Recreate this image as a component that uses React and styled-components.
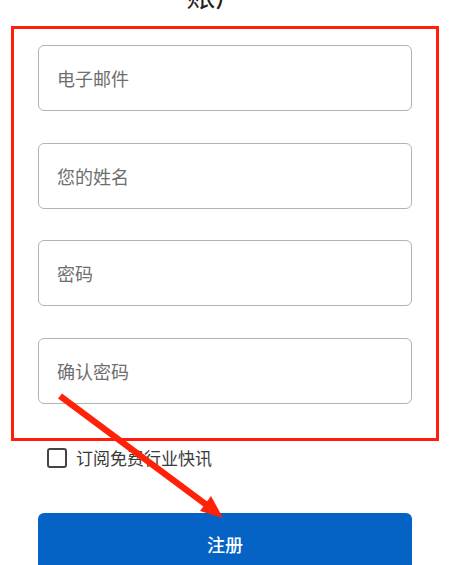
import React from "react";
import styled, { createGlobalStyle } from "styled-components";

const GlobalStyle = createGlobalStyle`
  html, body {
    margin: 0;
    padding: 0;
    background: #fff;
  }
  body {
    font-family: "Noto Sans CJK SC", "Noto Sans", sans-serif;
    overflow: hidden;
  }
`;

const Page = styled.div`
  position: relative;
  width: 471px;
  height: 565px;
  overflow: hidden;
  background: #fff;
`;

const Title = styled.h1`
  margin: -24px 0 0;
  padding-right: 40px;
  font-size: 29px;
  font-weight: 400;
  line-height: 36px;
  color: #222;
  text-align: center;
`;

const Highlight = styled.div`
  box-sizing: border-box;
  margin: 14px 0 0 11px;
  width: 428px;
  border: 3px solid #ff1e0a;
  padding: 16px 0 34px 24px;
  display: flex;
  flex-direction: column;
  gap: 31.5px;
`;

const Field = styled.input`
  box-sizing: border-box;
  width: 374px;
  height: 66px;
  border: 1.5px solid #b3b3b3;
  border-radius: 6px;
  padding: 0 18px;
  font-family: inherit;
  font-size: 18px;
  color: #333;
  outline: none;
  &::placeholder {
    color: #6e6e6e;
  }
`;

const CheckRow = styled.label`
  display: flex;
  align-items: center;
  gap: 9px;
  margin: 7px 0 0 47px;
  height: 20px;
  font-size: 17px;
  color: #3a3a3a;
`;

const Box = styled.span`
  box-sizing: border-box;
  width: 20px;
  height: 20px;
  border: 2px solid #444;
  border-radius: 3px;
`;

const Submit = styled.button`
  display: block;
  margin: 45px 0 0 38px;
  padding: 0 0 4px;
  width: 374px;
  height: 66px;
  border: none;
  border-radius: 6px;
  background: #0563c6;
  color: #fff;
  font-family: inherit;
  font-size: 18px;
  font-weight: 500;
`;

const Arrow = styled.svg`
  position: absolute;
  left: 0;
  top: 0;
  pointer-events: none;
`;

const fields = ["电子邮件", "您的姓名", "密码", "确认密码"];

export default function App() {
  return (
    <Page>
      <GlobalStyle />
      <Title>账户</Title>
      <Highlight>
        {fields.map((f) => (
          <Field key={f} placeholder={f} type={f.includes("密码") ? "password" : "text"} />
        ))}
      </Highlight>
      <CheckRow>
        <Box />
        订阅免费行业快讯
      </CheckRow>
      <Submit>注册</Submit>
      <Arrow width="471" height="565" viewBox="0 0 471 565">
        <line x1="60" y1="396" x2="208" y2="506" stroke="#ff2108" strokeWidth="6.5" />
        <polygon points="223,518 200,511 211,496" fill="#ff2108" />
      </Arrow>
    </Page>
  );
}
